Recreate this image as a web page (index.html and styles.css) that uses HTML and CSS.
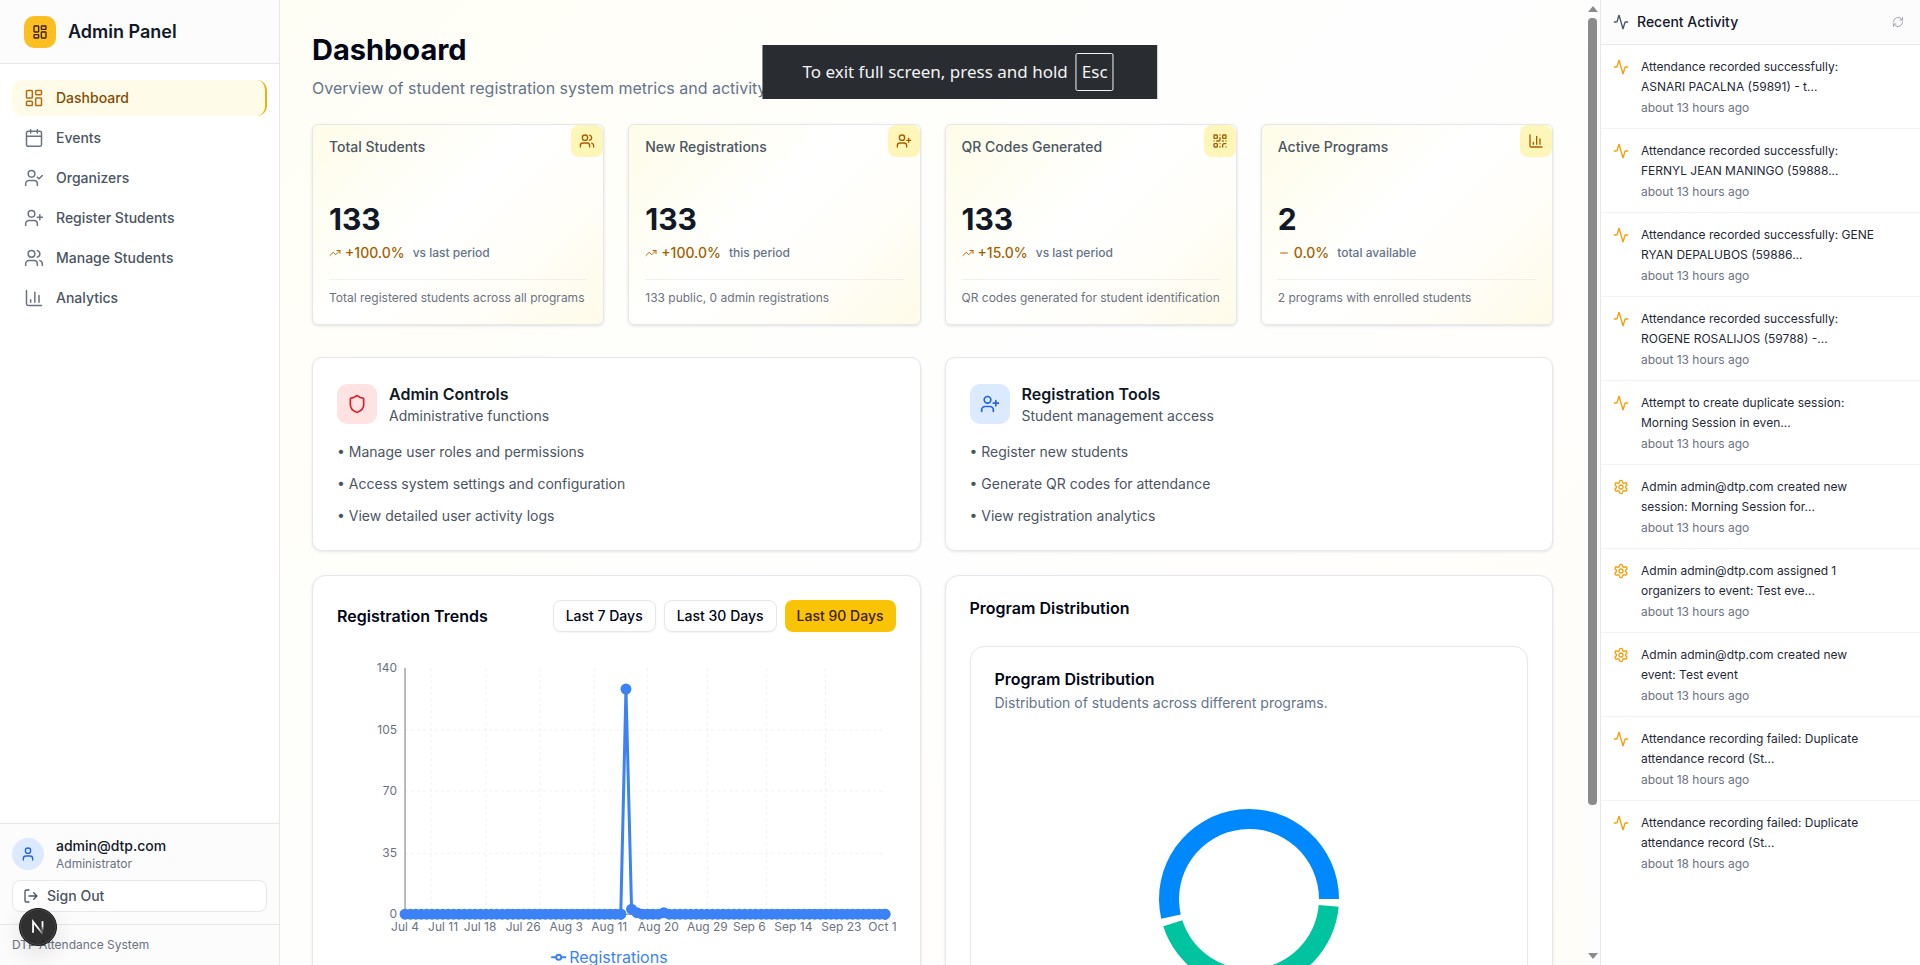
FILE: index.html
```html
<!DOCTYPE html>
<html lang="en">
<head>
<meta charset="utf-8">
<meta name="viewport" content="width=device-width, initial-scale=1">
<title>Admin Panel - Dashboard</title>
<link rel="stylesheet" href="styles.css">
</head>
<body>
<svg class="sprite" aria-hidden="true">
  <symbol id="i-dashboard" viewBox="0 0 24 24"><rect x="3" y="3" width="7" height="9" rx="1"/><rect x="14" y="3" width="7" height="5" rx="1"/><rect x="14" y="12" width="7" height="9" rx="1"/><rect x="3" y="16" width="7" height="5" rx="1"/></symbol>
  <symbol id="i-calendar" viewBox="0 0 24 24"><path d="M8 2v4M16 2v4M3 10h18"/><rect x="3" y="4" width="18" height="18" rx="2"/></symbol>
  <symbol id="i-user-check" viewBox="0 0 24 24"><path d="m16 11 2 2 4-4M16 21v-2a4 4 0 0 0-4-4H6a4 4 0 0 0-4 4v2"/><circle cx="9" cy="7" r="4"/></symbol>
  <symbol id="i-user-plus" viewBox="0 0 24 24"><path d="M16 21v-2a4 4 0 0 0-4-4H6a4 4 0 0 0-4 4v2M19 8v6M22 11h-6"/><circle cx="9" cy="7" r="4"/></symbol>
  <symbol id="i-users" viewBox="0 0 24 24"><path d="M16 21v-2a4 4 0 0 0-4-4H6a4 4 0 0 0-4 4v2M22 21v-2a4 4 0 0 0-3-3.87M16 3.13a4 4 0 0 1 0 7.75"/><circle cx="9" cy="7" r="4"/></symbol>
  <symbol id="i-chart" viewBox="0 0 24 24"><path d="M3 3v16a2 2 0 0 0 2 2h16M18 17V9M13 17V5M8 17v-3"/></symbol>
  <symbol id="i-user" viewBox="0 0 24 24"><path d="M19 21v-2a4 4 0 0 0-4-4H9a4 4 0 0 0-4 4v2"/><circle cx="12" cy="7" r="4"/></symbol>
  <symbol id="i-logout" viewBox="0 0 24 24"><path d="m16 17 5-5-5-5M21 12H9M9 21H5a2 2 0 0 1-2-2V5a2 2 0 0 1 2-2h4"/></symbol>
  <symbol id="i-trend" viewBox="0 0 24 24"><path d="M22 7l-8.5 8.5-5-5L2 17M16 7h6v6"/></symbol>
  <symbol id="i-minus" viewBox="0 0 24 24"><path d="M5 12h14"/></symbol>
  <symbol id="i-qr" viewBox="0 0 24 24"><rect x="3" y="3" width="5" height="5" rx="1"/><rect x="16" y="3" width="5" height="5" rx="1"/><rect x="3" y="16" width="5" height="5" rx="1"/><path d="M21 16h-3a2 2 0 0 0-2 2v3M21 21v.01M12 7v3a2 2 0 0 1-2 2H7M3 12h.01M12 3h.01M12 16v.01M16 12h1M21 12v.01M12 21v-1"/></symbol>
  <symbol id="i-shield" viewBox="0 0 24 24"><path d="M20 13c0 5-3.5 7.5-7.66 8.95a1 1 0 0 1-.67-.01C7.5 20.5 4 18 4 13V6a1 1 0 0 1 1-1c2 0 4.5-1.2 6.24-2.72a1.17 1.17 0 0 1 1.52 0C14.51 3.81 17 5 19 5a1 1 0 0 1 1 1z"/></symbol>
  <symbol id="i-activity" viewBox="0 0 24 24"><path d="M22 12h-2.48a2 2 0 0 0-1.93 1.46l-2.35 8.36a.25.25 0 0 1-.48 0L9.24 2.18a.25.25 0 0 0-.48 0l-2.35 8.36A2 2 0 0 1 4.49 12H2"/></symbol>
  <symbol id="i-settings" viewBox="0 0 24 24"><path d="M12.22 2h-.44a2 2 0 0 0-2 2v.18a2 2 0 0 1-1 1.73l-.43.25a2 2 0 0 1-2 0l-.15-.08a2 2 0 0 0-2.73.73l-.22.38a2 2 0 0 0 .73 2.73l.15.1a2 2 0 0 1 1 1.72v.51a2 2 0 0 1-1 1.74l-.15.09a2 2 0 0 0-.73 2.73l.22.38a2 2 0 0 0 2.73.73l.15-.08a2 2 0 0 1 2 0l.43.25a2 2 0 0 1 1 1.73V20a2 2 0 0 0 2 2h.44a2 2 0 0 0 2-2v-.18a2 2 0 0 1 1-1.73l.43-.25a2 2 0 0 1 2 0l.15.08a2 2 0 0 0 2.73-.73l.22-.39a2 2 0 0 0-.73-2.73l-.15-.08a2 2 0 0 1-1-1.74v-.5a2 2 0 0 1 1-1.74l.15-.09a2 2 0 0 0 .73-2.73l-.22-.38a2 2 0 0 0-2.73-.73l-.15.08a2 2 0 0 1-2 0l-.43-.25a2 2 0 0 1-1-1.73V4a2 2 0 0 0-2-2z"/><circle cx="12" cy="12" r="3"/></symbol>
  <symbol id="i-refresh" viewBox="0 0 24 24"><path d="M3 12a9 9 0 0 1 9-9 9.75 9.75 0 0 1 6.74 2.74L21 8M21 3v5h-5M21 12a9 9 0 0 1-9 9 9.75 9.75 0 0 1-6.74-2.74L3 16M8 16H3v5"/></symbol>
</svg>

<div class="app">
  <aside class="sidebar">
    <div class="brand">
      <span class="brand-logo"><svg class="icon icon-16"><use href="#i-dashboard"/></svg></span>
      <span class="brand-name">Admin Panel</span>
    </div>
    <nav class="nav" aria-label="Main">
      <a class="nav-link active" href="#dashboard"><svg class="icon icon-20"><use href="#i-dashboard"/></svg>Dashboard</a>
      <a class="nav-link" href="#events"><svg class="icon icon-20"><use href="#i-calendar"/></svg>Events</a>
      <a class="nav-link" href="#organizers"><svg class="icon icon-20"><use href="#i-user-check"/></svg>Organizers</a>
      <a class="nav-link" href="#register"><svg class="icon icon-20"><use href="#i-user-plus"/></svg>Register Students</a>
      <a class="nav-link" href="#manage"><svg class="icon icon-20"><use href="#i-users"/></svg>Manage Students</a>
      <a class="nav-link" href="#analytics"><svg class="icon icon-20"><use href="#i-chart"/></svg>Analytics</a>
    </nav>
    <div class="account">
      <div class="account-user">
        <span class="avatar"><svg class="icon icon-16"><use href="#i-user"/></svg></span>
        <div>
          <div class="account-name">admin@dtp.com</div>
          <div class="account-role">Administrator</div>
        </div>
      </div>
      <button class="sign-out" type="button"><svg class="icon icon-16"><use href="#i-logout"/></svg>Sign Out</button>
    </div>
    <div class="sidebar-foot">DTP Attendance System</div>
  </aside>

  <div class="main-wrap">
    <main class="main">
      <header class="page-head">
        <h1>Dashboard</h1>
        <p>Overview of student registration system metrics and activity</p>
      </header>

      <section class="stats">
        <article class="stat">
          <div class="stat-top"><h2>Total Students</h2><span class="stat-icon"><svg class="icon icon-16"><use href="#i-users"/></svg></span></div>
          <div class="stat-value">133</div>
          <div class="stat-change"><svg class="icon icon-12"><use href="#i-trend"/></svg><b>+100.0%</b><span>vs last period</span></div>
          <p class="stat-note">Total registered students across all programs</p>
        </article>
        <article class="stat">
          <div class="stat-top"><h2>New Registrations</h2><span class="stat-icon"><svg class="icon icon-16"><use href="#i-user-plus"/></svg></span></div>
          <div class="stat-value">133</div>
          <div class="stat-change"><svg class="icon icon-12"><use href="#i-trend"/></svg><b>+100.0%</b><span>this period</span></div>
          <p class="stat-note">133 public, 0 admin registrations</p>
        </article>
        <article class="stat">
          <div class="stat-top"><h2>QR Codes Generated</h2><span class="stat-icon"><svg class="icon icon-16"><use href="#i-qr"/></svg></span></div>
          <div class="stat-value">133</div>
          <div class="stat-change"><svg class="icon icon-12"><use href="#i-trend"/></svg><b>+15.0%</b><span>vs last period</span></div>
          <p class="stat-note">QR codes generated for student identification</p>
        </article>
        <article class="stat">
          <div class="stat-top"><h2>Active Programs</h2><span class="stat-icon"><svg class="icon icon-16"><use href="#i-chart"/></svg></span></div>
          <div class="stat-value">2</div>
          <div class="stat-change"><svg class="icon icon-12"><use href="#i-minus"/></svg><b>0.0%</b><span>total available</span></div>
          <p class="stat-note">2 programs with enrolled students</p>
        </article>
      </section>

      <section class="pair">
        <article class="tool">
          <div class="tool-head">
            <span class="tool-icon red"><svg class="icon icon-20"><use href="#i-shield"/></svg></span>
            <div><h3>Admin Controls</h3><p>Administrative functions</p></div>
          </div>
          <ul class="tool-list">
            <li>• Manage user roles and permissions</li>
            <li>• Access system settings and configuration</li>
            <li>• View detailed user activity logs</li>
          </ul>
        </article>
        <article class="tool">
          <div class="tool-head">
            <span class="tool-icon blue"><svg class="icon icon-20"><use href="#i-user-plus"/></svg></span>
            <div><h3>Registration Tools</h3><p>Student management access</p></div>
          </div>
          <ul class="tool-list">
            <li>• Register new students</li>
            <li>• Generate QR codes for attendance</li>
            <li>• View registration analytics</li>
          </ul>
        </article>
      </section>

      <section class="pair">
        <article class="panel">
          <div class="panel-head">
            <h3>Registration Trends</h3>
            <div class="ranges">
              <button class="range" type="button">Last 7 Days</button>
              <button class="range" type="button">Last 30 Days</button>
              <button class="range selected" type="button">Last 90 Days</button>
            </div>
          </div>
          <svg class="trend" viewBox="0 0 558 320" role="img" aria-label="Registrations per day">
            <g class="grid">
              <path d="M68 74H548M68 135H548M68 197H548"/>
              <path d="M94 12V258M149 12V258M203 12V258M257 12V258M310 12V258M370 12V258M429 12V258M488 12V258"/>
            </g>
            <path class="axis" d="M68 12V258H548"/>
            <g class="ticks y">
              <text x="60" y="16">140</text><text x="60" y="78">105</text><text x="60" y="139">70</text><text x="60" y="201">35</text><text x="60" y="262">0</text>
            </g>
            <g class="ticks x">
              <text x="68" y="275">Jul 4</text><text x="106" y="275">Jul 11</text><text x="143" y="275">Jul 18</text><text x="186" y="275">Jul 26</text><text x="229" y="275">Aug 3</text><text x="272" y="275">Aug 11</text><text x="321" y="275">Aug 20</text><text x="370" y="275">Aug 29</text><text x="412" y="275">Sep 6</text><text x="456" y="275">Sep 14</text><text x="504" y="275">Sep 23</text><text x="545" y="275">Oct 1</text>
            </g>
            <path class="series" d="M68 258H283.5L288.7 33L294.3 253L299.7 256.5L305 258H321L326.5 256.5L332 258H547.5"/>
            <path class="dots" pathLength="40" d="M68 258H283.5"/>
            <path class="dots" pathLength="3" d="M305 258H321"/>
            <path class="dots" pathLength="40" d="M332 258H547.5"/>
            <g class="dot"><circle cx="283.5" cy="258" r="5.5"/><circle cx="288.7" cy="33" r="5.5"/><circle cx="294.3" cy="253" r="5.5"/><circle cx="299.7" cy="256.5" r="5.5"/><circle cx="321" cy="258" r="5.5"/><circle cx="326.5" cy="256.5" r="5.5"/><circle cx="547.5" cy="258" r="5.5"/></g>
            <path class="legend-line" d="M214 301H219M224 301H229"/><circle class="legend-ring" cx="221.500" cy="301" r="2.500"/>
            <text class="legend-text" x="232" y="307">Registrations</text>
          </svg>
        </article>
        <article class="panel">
          <h3>Program Distribution</h3>
          <div class="inner">
            <h3>Program Distribution</h3>
            <p>Distribution of students across different programs.</p>
            <svg class="donut" viewBox="0 0 180 180" role="img" aria-label="Students by program">
              <path fill="#0088fe" d="M180 90A90 90 0 1 0 2.200 109.790L21.710 105.390A70 70 0 1 1 160 90Z"/>
              <path fill="#00c49f" d="M4.260 117.360A90 90 0 0 0 179.660 97.840L159.730 96.100A70 70 0 0 1 23.310 111.280Z"/>
            </svg>
          </div>
        </article>
      </section>
    </main>
    <div class="scrollbar" aria-hidden="true"><i class="arrow up"></i><i class="thumb"></i><i class="track"></i><i class="arrow down"></i></div>
  </div>

  <aside class="activity">
    <div class="activity-head">
      <svg class="icon icon-16"><use href="#i-activity"/></svg>
      <h2>Recent Activity</h2>
      <button class="refresh" type="button" aria-label="Refresh"><svg class="icon icon-12"><use href="#i-refresh"/></svg></button>
    </div>
    <ul class="feed">
      <li><svg class="icon icon-16"><use href="#i-activity"/></svg><div><p>Attendance recorded successfully: ASNARI PACALNA (59891) - t...</p><time>about 13 hours ago</time></div></li>
      <li><svg class="icon icon-16"><use href="#i-activity"/></svg><div><p>Attendance recorded successfully: FERNYL JEAN MANINGO (59888...</p><time>about 13 hours ago</time></div></li>
      <li><svg class="icon icon-16"><use href="#i-activity"/></svg><div><p>Attendance recorded successfully: GENE RYAN DEPALUBOS (59886...</p><time>about 13 hours ago</time></div></li>
      <li><svg class="icon icon-16"><use href="#i-activity"/></svg><div><p>Attendance recorded successfully: ROGENE ROSALIJOS (59788) -...</p><time>about 13 hours ago</time></div></li>
      <li><svg class="icon icon-16"><use href="#i-activity"/></svg><div><p>Attempt to create duplicate session: Morning Session in even...</p><time>about 13 hours ago</time></div></li>
      <li><svg class="icon icon-16"><use href="#i-settings"/></svg><div><p>Admin admin@dtp.com created new session: Morning Session for...</p><time>about 13 hours ago</time></div></li>
      <li><svg class="icon icon-16"><use href="#i-settings"/></svg><div><p>Admin admin@dtp.com assigned 1 organizers to event: Test eve...</p><time>about 13 hours ago</time></div></li>
      <li><svg class="icon icon-16"><use href="#i-settings"/></svg><div><p>Admin admin@dtp.com created new event: Test event</p><time>about 13 hours ago</time></div></li>
      <li><svg class="icon icon-16"><use href="#i-activity"/></svg><div><p>Attendance recording failed: Duplicate attendance record (St...</p><time>about 18 hours ago</time></div></li>
      <li><svg class="icon icon-16"><use href="#i-activity"/></svg><div><p>Attendance recording failed: Duplicate attendance record (St...</p><time>about 18 hours ago</time></div></li>
    </ul>
  </aside>
</div>

<div class="fullscreen-hint">To exit full screen, press and hold <kbd>Esc</kbd></div>
<button class="dev-badge" type="button" aria-label="Open developer tools">
  <svg viewBox="0 0 40 40" aria-hidden="true"><defs><linearGradient id="n1" x1="0" y1="0" x2="1" y2="1"><stop offset=".5" stop-color="#fff"/><stop offset="1" stop-color="#fff" stop-opacity=".3"/></linearGradient><linearGradient id="n2" x1="0" y1="0" x2="0" y2="1"><stop offset=".4" stop-color="#fff"/><stop offset="1" stop-color="#fff" stop-opacity="0"/></linearGradient></defs><path d="M14.500 26.500V14L25 27.500" fill="none" stroke="url(#n1)" stroke-width="2"/><rect x="24" y="13.500" width="2" height="12" fill="url(#n2)"/></svg>
</button>
</body>
</html>
```
FILE: styles.css
```css
* { box-sizing: border-box; margin: 0; padding: 0; }

body {
  font-family: Inter, "Liberation Sans", sans-serif;
  font-size: 14px;
  line-height: 20px;
  color: #111827;
  background: #fff;
}

button { font: inherit; color: inherit; cursor: pointer; }
ul { list-style: none; }
a { text-decoration: none; color: inherit; }

.sprite { position: absolute; width: 0; height: 0; }

.icon {
  flex: none;
  display: block;
  fill: none;
  stroke: currentColor;
  stroke-width: 2;
  stroke-linecap: round;
  stroke-linejoin: round;
}
.icon-12 { width: 12px; height: 12px; }
.icon-16 { width: 16px; height: 16px; }
.icon-20 { width: 20px; height: 20px; }

.app {
  display: grid;
  grid-template-columns: 280px minmax(0, 1fr) 320px;
  height: 100vh;
  overflow: hidden;
}

/* Sidebar */
.sidebar {
  display: flex;
  flex-direction: column;
  border-right: 1px solid #e5e7eb;
  background: #fff;
}
.brand {
  display: flex;
  align-items: center;
  gap: 12px;
  padding: 16px 24px 15px;
  border-bottom: 1px solid #e5e7eb;
  background: #fcfcfd;
}
.brand-logo {
  display: grid;
  place-items: center;
  width: 32px;
  height: 32px;
  border-radius: 10px;
  background: #fbbf24;
  color: #422006;
}
.brand-name { font-size: 18px; font-weight: 600; line-height: 28px; }
.nav {
  flex: 1;
  display: flex;
  flex-direction: column;
  gap: 4px;
  padding: 16px 12px;
}
.nav-link {
  display: flex;
  align-items: center;
  gap: 12px;
  padding: 8px 12px;
  border-radius: 10px;
  font-weight: 500;
  color: #4b5563;
}
.nav-link .icon { color: #6b7280; stroke-width: 1.8; }
.nav-link.active { background: #fefce8; border-right: 2px solid #eab308; color: #894b00; }
.nav-link.active .icon { color: #b7690c; }

.account {
  display: flex;
  flex-direction: column;
  gap: 8px;
  padding: 12px;
  border-top: 1px solid #e5e7eb;
  background: #fcfcfd;
}
.account-user { display: flex; align-items: center; gap: 12px; }
.avatar {
  display: grid;
  place-items: center;
  width: 32px;
  height: 32px;
  border-radius: 50%;
  background: #dbeafe;
  color: #2563eb;
}
.account-name { font-weight: 500; }
.account-role { font-size: 12px; line-height: 16px; color: #6b7280; }
.sign-out {
  display: flex;
  align-items: center;
  gap: 8px;
  height: 32px;
  padding: 0 10px;
  border: 1px solid #e5e7eb;
  border-radius: 8px;
  background: #fff;
  font-weight: 500;
  color: #4b5563;
}
.sidebar-foot {
  padding: 12px;
  border-top: 1px solid #e5e7eb;
  background: #fcfcfd;
  font-size: 12px;
  line-height: 16px;
  color: #6b7280;
}

/* Main column */
.main-wrap {
  display: flex;
  min-height: 0;
  background: linear-gradient(135deg, #fffef5 0%, #fefefe 50%, #fffdf8 100%);
}
.main {
  flex: 1;
  min-width: 0;
  padding: 32px;
  overflow: hidden;
}
.scrollbar {
  display: flex;
  flex-direction: column;
  align-items: center;
  gap: 6px;
  width: 15px;
  padding: 6px 0;
  background: #fdfdfd;
}
.thumb { flex: 782; width: 9px; border-radius: 4px; background: #8b8b8b; }
.track { flex: 135; }
.arrow { border: 5px solid transparent; }
.arrow.up { border-bottom: 6px solid #8b8b8b; border-top: 0; }
.arrow.down { border-top: 6px solid #8b8b8b; border-bottom: 0; }

.page-head { margin-bottom: 24px; }
.page-head h1 { font-size: 29px; line-height: 36px; font-weight: 700; color: #020617; margin-bottom: 8px; }
.page-head p { font-size: 16px; line-height: 24px; color: #64748b; }

.stats {
  display: grid;
  grid-template-columns: repeat(4, minmax(0, 1fr));
  gap: 24px;
  margin-bottom: 32px;
}
.stat {
  overflow: hidden;
  padding: 0 16px 18px;
  border: 1px solid #e5e7eb;
  border-radius: 6px;
  background: linear-gradient(135deg, #fefce8 0%, #ffffff 45%, #fffef9 70%, #fefbe8 100%);
  box-shadow: 0 1px 3px rgba(0, 0, 0, 0.12);
}
.stat-top { display: flex; justify-content: space-between; margin-right: -16px; }
.stat-top h2 { padding-top: 12px; font-size: 14px; font-weight: 500; color: #4b5563; }
.stat-icon {
  display: grid;
  place-items: center;
  width: 32px;
  height: 32px;
  border-radius: 8px;
  background: #fef6b8;
  color: #a65f00;
}
.stat-value { margin-top: 44px; font-size: 30px; line-height: 36px; font-weight: 700; }
.stat-change { display: flex; align-items: center; gap: 4px; margin-top: 6px; color: #b7690c; }
.stat-change b { font-weight: 500; color: #a65f00; }
.stat-change span { margin-left: 4px; font-size: 12px; font-weight: 500; color: #64748b; }
.stat-note {
  margin-top: 16px;
  padding-top: 10px;
  border-top: 1px solid #f1f1ec;
  font-size: 12px;
  line-height: 16px;
  color: #6b7280;
  white-space: nowrap;
}

.pair {
  display: grid;
  grid-template-columns: repeat(2, minmax(0, 1fr));
  gap: 24px;
  margin-bottom: 24px;
}
.tool, .panel {
  padding: 24px;
  border: 1px solid #e5e7eb;
  background: #fff;
  box-shadow: 0 1px 3px rgba(0, 0, 0, 0.1);
}
.tool { border-radius: 10px; }
.panel { border-radius: 14px; padding-bottom: 32px; }
.tool-head { display: flex; align-items: center; gap: 12px; margin-bottom: 16px; }
.tool-icon { display: grid; place-items: center; width: 40px; height: 40px; border-radius: 10px; }
.tool-icon.red { background: #ffe2e2; color: #dc1f26; }
.tool-icon.blue { background: #dbeafe; color: #2563eb; }
.tool h3 { font-size: 16px; line-height: 24px; font-weight: 600; }
.tool p { color: #4b5563; }
.tool-list { display: grid; gap: 12px; color: #4b5563; }

.panel h3 { font-size: 16px; line-height: 16px; font-weight: 600; color: #020617; }
.panel-head { display: flex; align-items: center; justify-content: space-between; gap: 12px; margin-bottom: 24px; }
.ranges { display: flex; gap: 8px; }
.range {
  height: 32px;
  padding: 0 12px;
  border: 1px solid #e5e7eb;
  border-radius: 8px;
  background: #fff;
  font-weight: 500;
  color: #020617;
  white-space: nowrap;
  box-shadow: 0 1px 2px rgba(0, 0, 0, 0.05);
}
.range.selected { border: 0; background: #fac406; color: #422006; box-shadow: none; }

.trend { display: block; width: 100%; fill: none; }
.grid { stroke: #f1f1f1; stroke-dasharray: 3 3; }
.axis { stroke: #a3a3a3; stroke-width: 1.5; }
.ticks { fill: #6b7280; font-size: 12px; }
.ticks.y { text-anchor: end; }
.ticks.x { text-anchor: middle; }
.series { stroke: #3b82f6; stroke-width: 3; stroke-linejoin: round; }
.dots { stroke: #3b82f6; stroke-width: 11; stroke-linecap: round; stroke-dasharray: 0 1; }
.dot { fill: #3b82f6; }
.legend-line, .legend-ring { stroke: #3b82f6; stroke-width: 2; }
.legend-text { fill: #3b82f6; font-size: 16px; }

.inner {
  margin-top: 30px;
  padding: 24px;
  border: 1px solid #e5e7eb;
  border-radius: 14px;
  box-shadow: 0 1px 2px rgba(0, 0, 0, 0.04);
}
.inner p { margin-top: 6px; color: #64748b; }
.donut { display: block; width: 180px; height: 180px; margin: 96px auto 60px; }

/* Activity column */
.activity { border-left: 1px solid #e5e7eb; background: #fff; overflow: hidden; }
.activity-head {
  display: flex;
  align-items: center;
  gap: 8px;
  padding: 12px;
  border-bottom: 1px solid #e5e7eb;
  background: #fcfcfd;
  color: #4b5563;
}
.activity-head h2 { flex: 1; font-size: 14px; font-weight: 500; color: #111827; }
.refresh { padding: 4px; border: 0; background: none; color: #9ca3af; }
.feed li {
  display: flex;
  gap: 12px;
  padding: 12px;
  border-bottom: 1px solid #f1f2f4;
  color: #f59e0b;
}
.feed li:last-child { border-bottom: 0; }
.feed .icon { margin-top: 2px; }
.feed div { padding-right: 28px; }
.feed p { font-size: 12px; line-height: 20px; color: #1f2937; }
.feed time { display: block; margin-top: 3px; font-size: 12px; line-height: 16px; color: #6b7280; }

/* Overlays */
.fullscreen-hint {
  position: fixed;
  top: 45px;
  left: 50%;
  transform: translateX(-50%);
  display: flex;
  align-items: center;
  gap: 8px;
  height: 54px;
  padding: 0 44px 0 40px;
  background: #292c30;
  color: #f3f4f6;
  font-family: "Noto Sans", sans-serif;
  font-size: 17px;
  white-space: nowrap;
}
.fullscreen-hint kbd {
  padding: 8px 5px;
  border: 1px solid #f3f4f6;
  border-radius: 2px;
  font: inherit;
  line-height: 20px;
}
.dev-badge {
  position: fixed;
  left: 19px;
  bottom: 19px;
  width: 38px;
  height: 38px;
  border: 1px solid #171717;
  border-radius: 50%;
  background: rgba(32, 32, 32, 0.93);
  box-shadow: inset 0 0 0 1px #4a4a4a, 0 8px 24px rgba(0, 0, 0, 0.12);
}
.dev-badge svg { display: block; width: 100%; height: 100%; }
```
